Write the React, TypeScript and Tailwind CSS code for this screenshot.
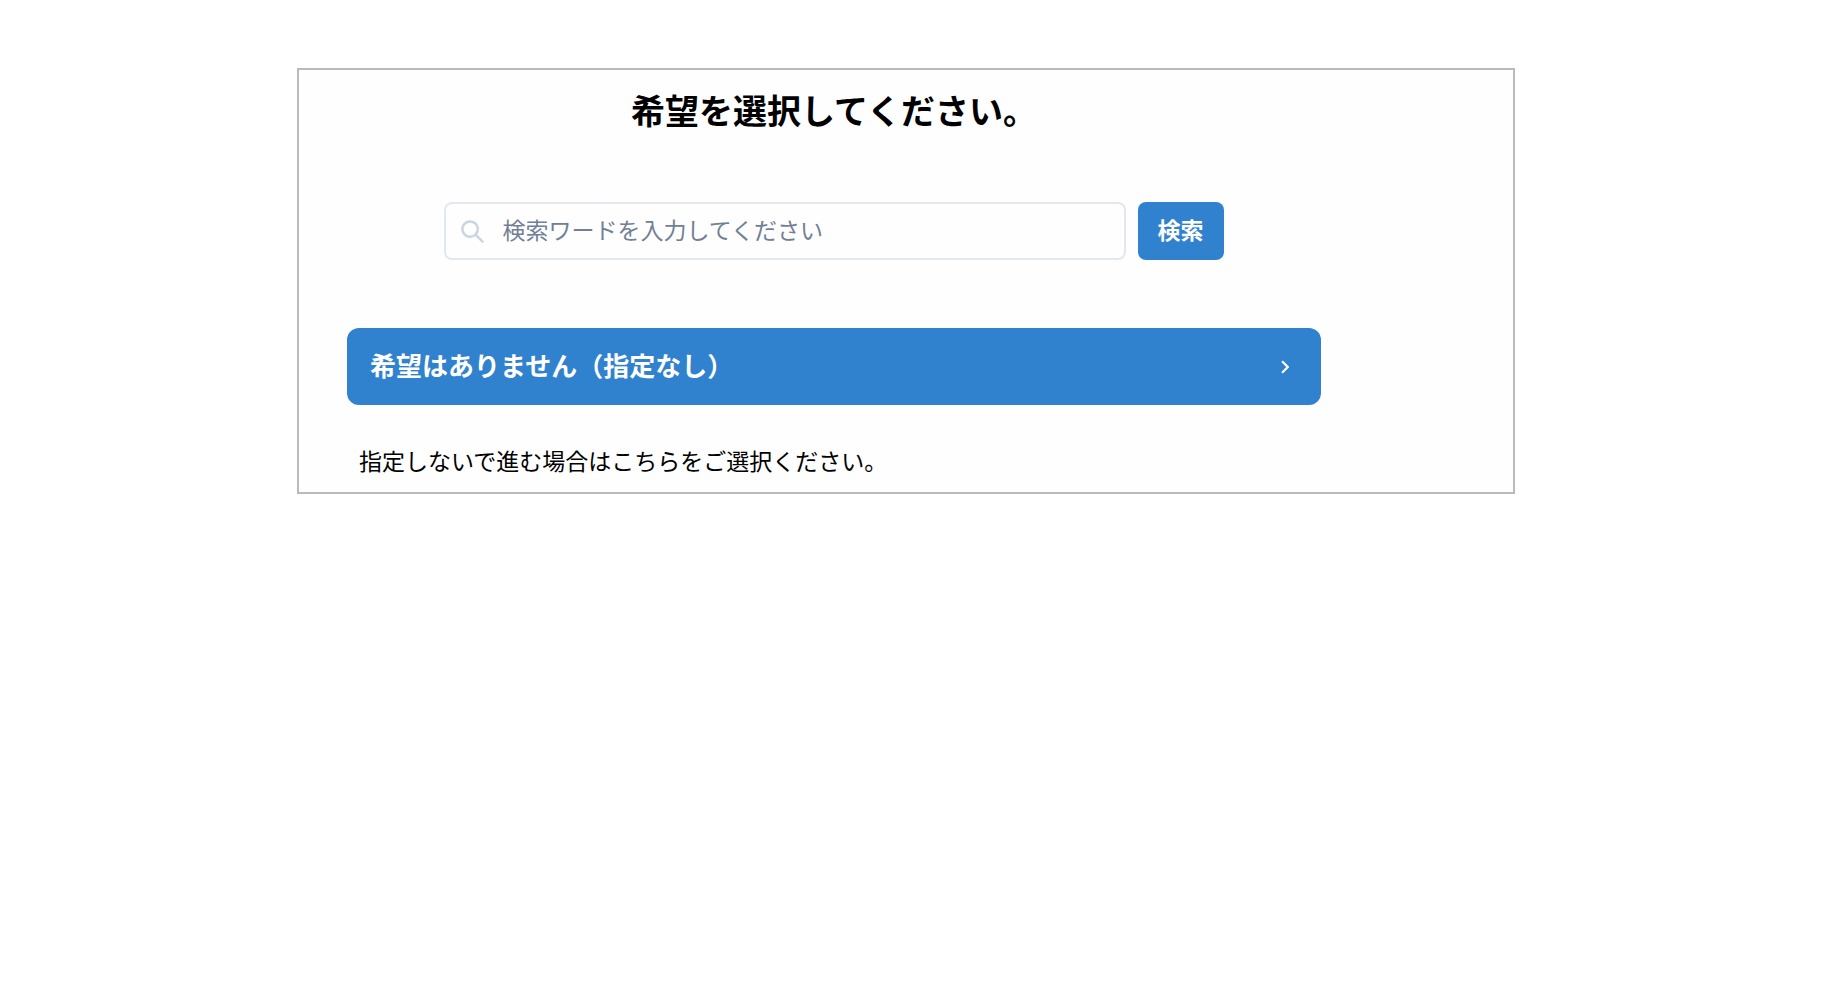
import React, { useState } from 'react';

interface IconProps {
  className?: string;
}

const SearchIcon: React.FC<IconProps> = ({ className }) => (
  <svg viewBox="0 0 24 24" className={className} fill="currentColor" aria-hidden="true">
    <path d="M23.384,21.619,16.855,15.09a9.284,9.284,0,1,0-1.768,1.768l6.529,6.529a1.266,1.266,0,0,0,1.768,0A1.251,1.251,0,0,0,23.384,21.619ZM2.75,9.5a6.75,6.75,0,1,1,6.75,6.75A6.758,6.758,0,0,1,2.75,9.5Z" />
  </svg>
);

const ChevronRightIcon: React.FC<IconProps> = ({ className }) => (
  <svg viewBox="0 0 24 24" className={className} fill="currentColor" aria-hidden="true">
    <path d="M10 6L8.59 7.41 13.17 12l-4.58 4.59L10 18l6-6z" />
  </svg>
);

const App: React.FC = () => {
  const [keyword, setKeyword] = useState('');

  return (
    <div className="min-h-screen bg-white pt-[68px] pr-4 font-['Noto_Sans_CJK_JP',sans-serif] text-black">
      <main className="mx-auto w-full max-w-[1218px] border-2 border-[#bababa] bg-[#fefefe] px-12 pt-5 pb-[14px]">
        <div className="w-full max-w-[974px]">
          <h1 className="text-center text-[34px] leading-[40px] font-bold">希望を選択してください。</h1>

          <form
            className="mx-auto mt-[72px] flex w-4/5 gap-3"
            onSubmit={(e) => e.preventDefault()}
          >
            <label className="flex h-[58px] min-w-0 flex-1 items-center rounded-lg border-2 border-[#e2e8f0] pr-4 pl-[15px]">
              <SearchIcon className="size-[23px] shrink-0 text-[#cbd5e0]" />
              <input
                type="text"
                value={keyword}
                onChange={(e) => setKeyword(e.target.value)}
                placeholder="検索ワードを入力してください"
                aria-label="検索ワード"
                className="ml-[18px] h-full min-w-0 flex-1 pb-1 text-[23px] outline-none placeholder:text-[#718096]"
              />
            </label>
            <button
              type="submit"
              className="h-[58px] shrink-0 rounded-lg bg-[#3182ce] px-5 pb-1 text-[23px] font-bold text-white hover:bg-[#2b6cb0]"
            >
              検索
            </button>
          </form>

          <button
            type="button"
            className="mt-[68px] flex h-[77px] w-full items-center justify-between rounded-xl bg-[#3182ce] px-[23px] text-left text-[26px] font-bold text-white hover:bg-[#2b6cb0]"
          >
            <span className="pb-1">希望はありません（指定なし）</span>
            <ChevronRightIcon className="size-[26px]" />
          </button>

          <p className="mt-[37px] pl-3 text-[23px] leading-[36px]">
            指定しないで進む場合はこちらをご選択ください。
          </p>
        </div>
      </main>
    </div>
  );
};

export default App;
